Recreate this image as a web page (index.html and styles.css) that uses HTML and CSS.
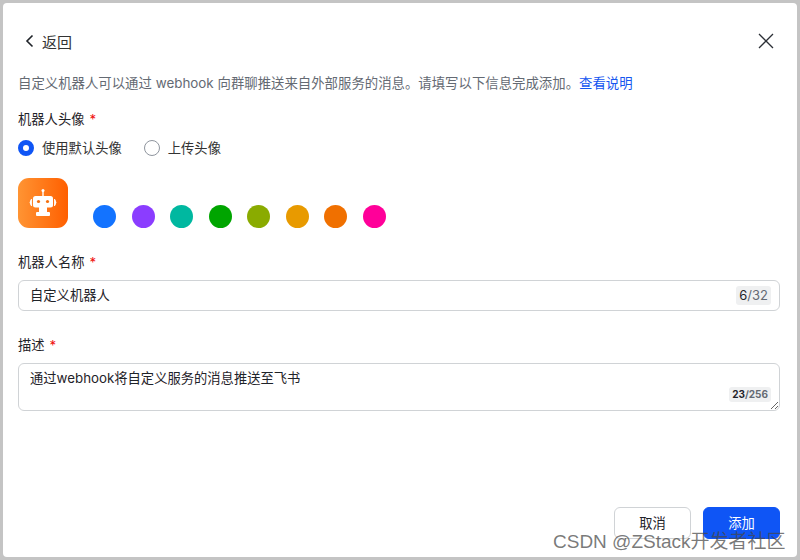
FILE: index.html
```html
<!DOCTYPE html>
<html lang="zh">

<head>
    <meta charset="utf-8">
    <meta name="viewport" content="width=device-width, initial-scale=1.0">
    <title>自定义机器人</title>
    <link rel="stylesheet" href="styles.css">
</head>

<body>
    <main class="dialog">
        <header class="top">
            <a class="back">
                <svg width="12" height="14" viewBox="0 0 12 14"><path d="M8.5 1.5 3 7l5.5 5.5" fill="none" stroke="#1f2329" stroke-width="1.6"/></svg>
                <span>返回</span>
            </a>
            <svg class="close" width="18" height="18" viewBox="0 0 18 18"><path d="M2 2l14 14M16 2 2 16" fill="none" stroke="#2b2f36" stroke-width="1.3"/></svg>
        </header>

        <p class="intro">自定义机器人可以通过 webhook 向群聊推送来自外部服务的消息。请填写以下信息完成添加。<a class="link">查看说明</a></p>

        <div class="label first">机器人头像<i>*</i></div>
        <div class="radios">
            <label class="radio"><span class="mark on"></span>使用默认头像</label>
            <label class="radio"><span class="mark"></span>上传头像</label>
        </div>

        <div class="avatars">
            <div class="avatar">
                <svg width="34" height="34" viewBox="0 0 34 34">
                    <circle cx="17" cy="4.500" r="1.500" fill="#fff"/>
                    <rect x="16.300" y="5" width="1.400" height="5" fill="#fff"/>
                    <rect x="7" y="10" width="20" height="11.500" rx="2.500" fill="#fff"/>
                    <circle cx="12.500" cy="15.500" r="1.600" fill="#f5700f"/>
                    <circle cx="21.500" cy="15.500" r="1.600" fill="#f5700f"/>
                    <path d="M5.500 13q-3 3.500 0 7zM28.500 13q3 3.500 0 7z" fill="#fff" stroke="#fff" stroke-width=".8"/>
                    <rect x="13" y="21" width="8" height="5" fill="#fff"/>
                    <rect x="10" y="26" width="14" height="4" rx="1" fill="#fff"/>
                </svg>
            </div>
            <span class="dot blue"></span>
            <span class="dot purple"></span>
            <span class="dot teal"></span>
            <span class="dot green"></span>
            <span class="dot olive"></span>
            <span class="dot amber"></span>
            <span class="dot orange"></span>
            <span class="dot pink"></span>
        </div>

        <div class="label name-label">机器人名称<i>*</i></div>
        <div class="field">
            <input class="input" type="text" value="自定义机器人">
            <span class="count"><b>6</b>/32</span>
        </div>

        <div class="label desc-label">描述<i>*</i></div>
        <div class="field">
            <textarea class="input area">通过webhook将自定义服务的消息推送至飞书</textarea>
            <span class="count small"><b>23</b>/256</span>
        </div>

        <footer class="actions">
            <button class="btn">取消</button>
            <button class="btn primary">添加</button>
        </footer>
    </main>

    <div class="watermark">CSDN @ZStack开发者社区</div>
</body>

</html>
```
FILE: styles.css
```css
* {
    box-sizing: border-box;
}

html,
body {
    height: 100%;
}

body {
    margin: 0;
    padding: 3px;
    background-color: #c4c4c4;
    font-family: Inter, "Noto Sans CJK SC", sans-serif;
    color: #1f2329;
    overflow: hidden;
}

.dialog {
    display: flex;
    flex-direction: column;
    height: 554px;
    padding: 0 17px 18px 15px;
    background-color: #fff;
    border-radius: 4px;
}

.top {
    display: flex;
    justify-content: space-between;
    align-items: center;
    height: 22px;
    margin-top: 27px;
}

.back {
    display: flex;
    align-items: center;
    gap: 6px;
    margin-left: 6px;
    font-size: 15px;
    color: #333;
}

.close {
    margin-right: 5px;
}

.intro {
    margin: 21px 0 0;
    font-size: 13.4px;
    line-height: 20px;
    color: #646a73;
}

.link {
    color: #1456f0;
}

.label {
    font-size: 13.3px;
    line-height: 20px;
    color: #1f2329;
}

.label i {
    margin-left: 5px;
    color: #f01010;
    font-style: normal;
}

.first {
    margin-top: 16px;
}

.radios {
    display: flex;
    gap: 22px;
    margin-top: 9px;
}

.radio {
    display: flex;
    align-items: center;
    gap: 8px;
    font-size: 13.3px;
    line-height: 20px;
    color: #333;
}

.mark {
    width: 16px;
    height: 16px;
    border: 1px solid #8f959e;
    border-radius: 50%;
}

.mark.on {
    border: 5px solid #0f55f5;
}

.avatars {
    display: flex;
    align-items: flex-end;
    gap: 15.5px;
    margin-top: 20px;
}

.avatar {
    display: flex;
    align-items: center;
    justify-content: center;
    width: 50px;
    height: 50px;
    margin-right: 9.5px;
    border-radius: 11px;
    background: linear-gradient(90deg, #ff9433, #ff5f00);
}

.dot {
    width: 23px;
    height: 23px;
    border-radius: 50%;
}

.blue { background-color: #1373ff; }
.purple { background-color: #8b3dff; }
.teal { background-color: #00b8a0; }
.green { background-color: #00a500; }
.olive { background-color: #8aab00; }
.amber { background-color: #e89a00; }
.orange { background-color: #f07000; }
.pink { background-color: #ff0099; }

.name-label {
    margin-top: 24px;
}

.desc-label {
    margin-top: 24px;
}

.field {
    position: relative;
    margin-top: 8px;
}

.input {
    display: block;
    width: 100%;
    height: 31px;
    padding: 0 11px 2px;
    border: 1px solid #d0d3d6;
    border-radius: 6px;
    font-family: inherit;
    font-size: 13.3px;
    color: #1f2329;
    background-color: #fff;
    outline: none;
}

.area {
    height: 48px;
    padding-top: 5px;
    line-height: 18px;
}

.count {
    position: absolute;
    top: 6px;
    right: 9px;
    padding: 0 3px;
    border-radius: 3px;
    background-color: #eff0f1;
    font-size: 13px;
    line-height: 19px;
    color: #646a73;
}

.count b {
    font-weight: normal;
    color: #1f2329;
}

.count.small {
    top: 24px;
    right: 9px;
    font-size: 10px;
    line-height: 15px;
    font-weight: bold;
}

.count.small b {
    font-weight: bold;
}

.actions {
    display: flex;
    justify-content: flex-end;
    gap: 12px;
    margin-top: auto;
}

.btn {
    width: 77px;
    height: 32px;
    padding: 0 0 2px;
    border: 1px solid #d0d3d6;
    border-radius: 6px;
    background-color: #fff;
    font-family: inherit;
    font-size: 13.3px;
    color: #1f2329;
}

.primary {
    border-color: #0f55f5;
    background-color: #0f55f5;
    color: #fff;
}

.watermark {
    position: absolute;
    left: 553px;
    top: 531px;
    font-family: "Liberation Sans", "Noto Sans CJK SC", sans-serif;
    font-size: 19px;
    line-height: 22px;
    color: rgba(70, 70, 70, 0.72);
    white-space: nowrap;
}
```
